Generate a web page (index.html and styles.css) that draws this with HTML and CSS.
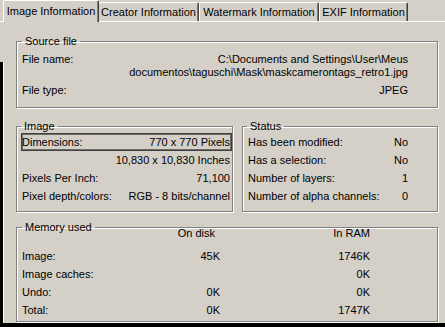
FILE: index.html
```html
<!DOCTYPE html>
<html lang="en">
<head>
    <meta charset="UTF-8">
    <title>Image Information</title>
    <link rel="stylesheet" href="styles.css">
</head>
<body>
<div class="tabs">
    <div class="tab tab-active tab-image">Image Information</div>
    <div class="tab tab-creator">Creator Information</div>
    <div class="tab tab-watermark">Watermark Information</div>
    <div class="tab tab-exif">EXIF Information</div>
</div>
<div class="pane">
    <fieldset class="group group-source">
        <legend>Source file</legend>
        <div class="row">
            <span>File name:</span>
            <span class="value">C:\Documents and Settings\User\Meus<br>documentos\taguschi\Mask\maskcamerontags_retro1.jpg</span>
        </div>
        <div class="row row-type">
            <span>File type:</span>
            <span class="value">JPEG</span>
        </div>
    </fieldset>

    <div class="pair">
        <fieldset class="group group-image">
            <legend>Image</legend>
            <div class="line line-focus"><span>Dimensions:</span><span>770 x 770 Pixels</span></div>
            <div class="line"><span></span><span>10,830 x 10,830 Inches</span></div>
            <div class="line"><span>Pixels Per Inch:</span><span>71,100</span></div>
            <div class="line"><span>Pixel depth/colors:</span><span>RGB - 8 bits/channel</span></div>
        </fieldset>
        <fieldset class="group group-status">
            <legend>Status</legend>
            <div class="line"><span>Has been modified:</span><span>No</span></div>
            <div class="line"><span>Has a selection:</span><span>No</span></div>
            <div class="line"><span>Number of layers:</span><span>1</span></div>
            <div class="line"><span>Number of alpha channels:</span><span>0</span></div>
        </fieldset>
    </div>

    <fieldset class="group group-memory">
        <legend>Memory used</legend>
        <div class="mem mem-head"><span></span><span class="disk-head">On disk</span><span>In RAM</span></div>
        <div class="mem"><span>Image:</span><span>45K</span><span>1746K</span></div>
        <div class="mem"><span>Image caches:</span><span></span><span>0K</span></div>
        <div class="mem"><span>Undo:</span><span>0K</span><span>0K</span></div>
        <div class="mem"><span>Total:</span><span>0K</span><span>1747K</span></div>
    </fieldset>
</div>
</body>
</html>
```

FILE: styles.css
```css
body {
    margin: 0;
    width: 445px;
    height: 327px;
    overflow: hidden;
    background-color: #000;
    font-family: "Liberation Sans", Arial, sans-serif;
    font-size: 11px;
    line-height: 13px;
    color: #000;
}
.tabs {
    display: flex;
    align-items: flex-end;
    height: 21px;
    padding-left: 3px;
    background-color: #d4d0c8;
}
.tab {
    box-sizing: border-box;
    height: 19px;
    line-height: 18px;
    text-align: center;
    white-space: nowrap;
    border-top: 1px solid #fff;
    border-left: 1px solid #fff;
    border-right: 1px solid #404040;
    box-shadow: inset -1px 0 0 #808080;
    border-radius: 2px 2px 0 0;
    background-color: #d4d0c8;
}
.tab-active {
    position: relative;
    z-index: 1;
    height: 22px;
    line-height: 20px;
    margin-bottom: -1px;
}
.tab-image { width: 96px; }
.tab-creator { width: 100px; border-left: none; }
.tab-watermark { width: 120px; }
.tab-exif { width: 89px; }
.pane {
    box-sizing: border-box;
    height: 302px;
    padding: 13px 0 0 16px;
    border-top: 1px solid #fff;
    background: linear-gradient(to right, #000 0 3px, #fff 3px 4px, transparent 4px) 0 40px / 100% 100% no-repeat, #d4d0c8;
}
.group {
    margin: 0;
    min-width: 0;
    border: 1px solid #808080;
    box-shadow: inset 1px 1px 0 #fff, 1px 1px 0 #fff;
}
.group legend {
    padding: 0 3px;
    line-height: 13px;
}
.group-source {
    width: 422px;
    box-sizing: border-box;
    padding: 5px 29px 10px 5px;
}
.row {
    display: flex;
    justify-content: space-between;
}
.row-type {
    margin-top: 5px;
}
.value {
    text-align: right;
}
.pair {
    display: grid;
    grid-template-columns: 217px 196px;
    column-gap: 9px;
    margin-top: 12px;
}
.group-image {
    box-sizing: border-box;
    padding: 0 0 6px 4px;
}
.group-status {
    box-sizing: border-box;
    padding: 0 27px 6px 4px;
}
.line {
    display: flex;
    justify-content: space-between;
    height: 18px;
    line-height: 16px;
    box-sizing: border-box;
    padding-right: 1px;
    border: 1px solid transparent;
}
.line-focus {
    border-color: #404040;
    box-shadow: inset 0 0 0 1px #6e6c68;
}
.group-memory {
    width: 422px;
    box-sizing: border-box;
    margin-top: 9px;
    padding: 0 0 2px 5px;
}
.mem {
    display: grid;
    grid-template-columns: 120px 78px 150px;
    line-height: 18px;
}
.mem span + span {
    text-align: right;
}
.mem-head {
    margin-top: -7px;
    margin-bottom: 7px;
    line-height: 13px;
}
.disk-head {
    padding-right: 5px;
}
```
